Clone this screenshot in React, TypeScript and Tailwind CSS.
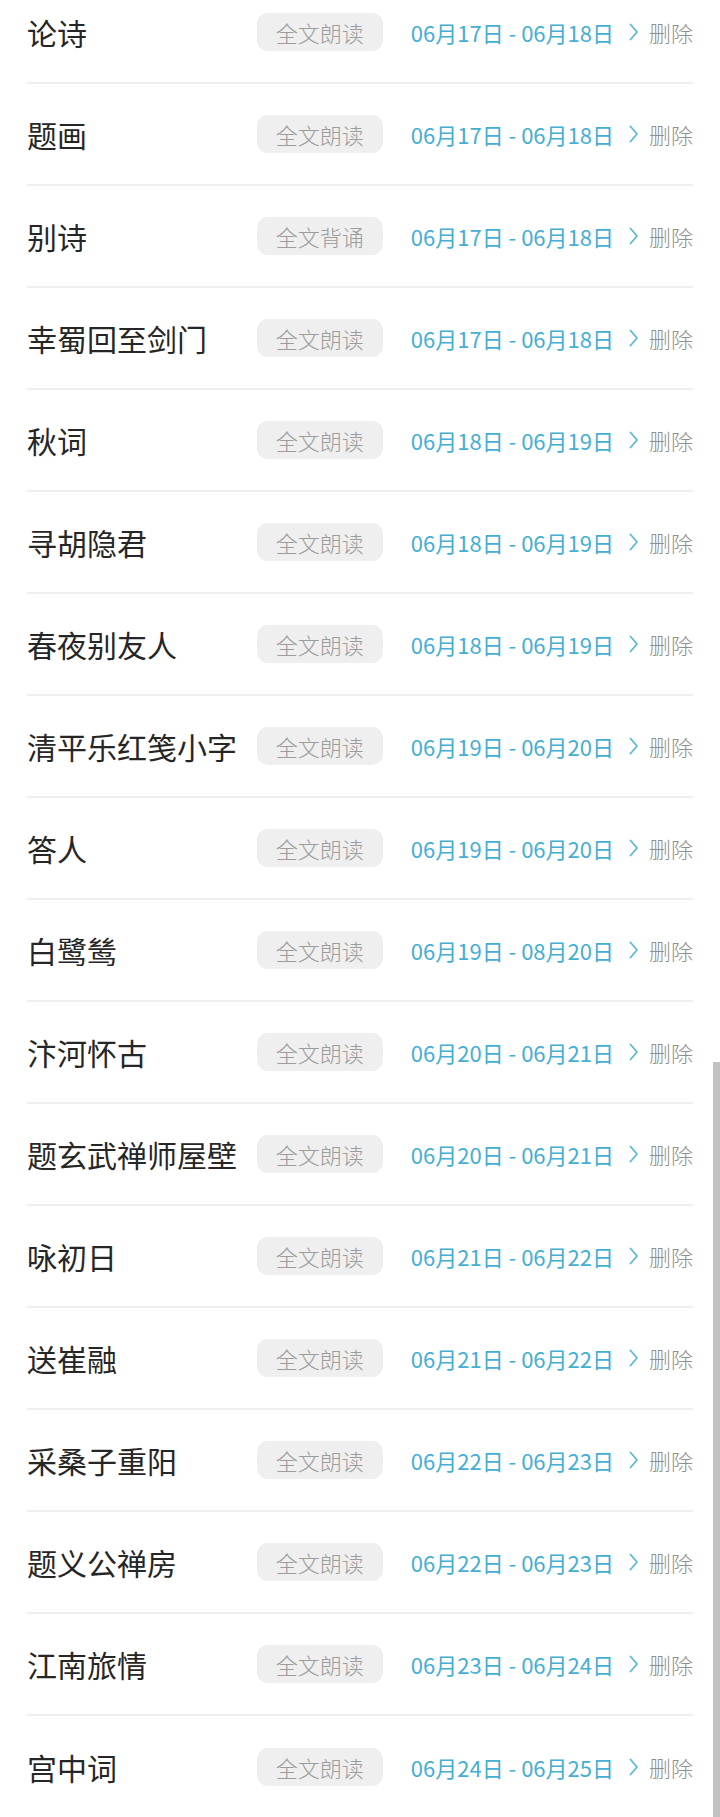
const rows: [string, string, string][] = [
  ["论诗", "全文朗读", "06月17日 - 06月18日"],
  ["题画", "全文朗读", "06月17日 - 06月18日"],
  ["别诗", "全文背诵", "06月17日 - 06月18日"],
  ["幸蜀回至剑门", "全文朗读", "06月17日 - 06月18日"],
  ["秋词", "全文朗读", "06月18日 - 06月19日"],
  ["寻胡隐君", "全文朗读", "06月18日 - 06月19日"],
  ["春夜别友人", "全文朗读", "06月18日 - 06月19日"],
  ["清平乐红笺小字", "全文朗读", "06月19日 - 06月20日"],
  ["答人", "全文朗读", "06月19日 - 06月20日"],
  ["白鹭鸶", "全文朗读", "06月19日 - 08月20日"],
  ["汴河怀古", "全文朗读", "06月20日 - 06月21日"],
  ["题玄武禅师屋壁", "全文朗读", "06月20日 - 06月21日"],
  ["咏初日", "全文朗读", "06月21日 - 06月22日"],
  ["送崔融", "全文朗读", "06月21日 - 06月22日"],
  ["采桑子重阳", "全文朗读", "06月22日 - 06月23日"],
  ["题义公禅房", "全文朗读", "06月22日 - 06月23日"],
  ["江南旅情", "全文朗读", "06月23日 - 06月24日"],
  ["宫中词", "全文朗读", "06月24日 - 06月25日"],
];

function Chevron() {
  return (
    <svg width="11" height="18" viewBox="0 0 11 18" className="shrink-0">
      <polyline
        points="2.5,1.5 9,9 2.5,16.5"
        fill="none"
        stroke="#5cb9d9"
        strokeWidth="1.8"
        strokeLinecap="round"
        strokeLinejoin="round"
      />
    </svg>
  );
}

function TaskRow({ title, tag, range }: { title: string; tag: string; range: string }) {
  return (
    <li className="mx-[27px] flex h-[102px] items-center border-b-2 border-[#efefef] last:border-b-0">
      <span className="flex-1 text-[30px] text-[#262626]">{title}</span>
      <span className="mr-[28px] flex h-[38px] items-center rounded-[11px] bg-[#efefef] px-[19px] text-[22px] font-light text-[#9c9c9c]">
        {tag}
      </span>
      <span className="mr-[14px] text-[22px] text-[#45aed4]">{range}</span>
      <Chevron />
      <span className="ml-[10px] text-[22px] font-light text-[#8f8f8f]">删除</span>
    </li>
  );
}

export default function App() {
  return (
    <div
      className="relative h-[1817px] w-[720px] overflow-hidden bg-white"
      style={{ fontFamily: '"Noto Sans CJK SC", "Noto Sans", sans-serif' }}
    >
      <ul className="-mt-[18px] flex flex-col">
        {rows.map(([title, tag, range], i) => (
          <TaskRow key={i} title={title} tag={tag} range={range} />
        ))}
      </ul>
      {/* scrollbar */}
      <div className="absolute right-0 top-[1062px] h-[755px] w-[7px] bg-[#c2c2c2]" />
    </div>
  );
}
